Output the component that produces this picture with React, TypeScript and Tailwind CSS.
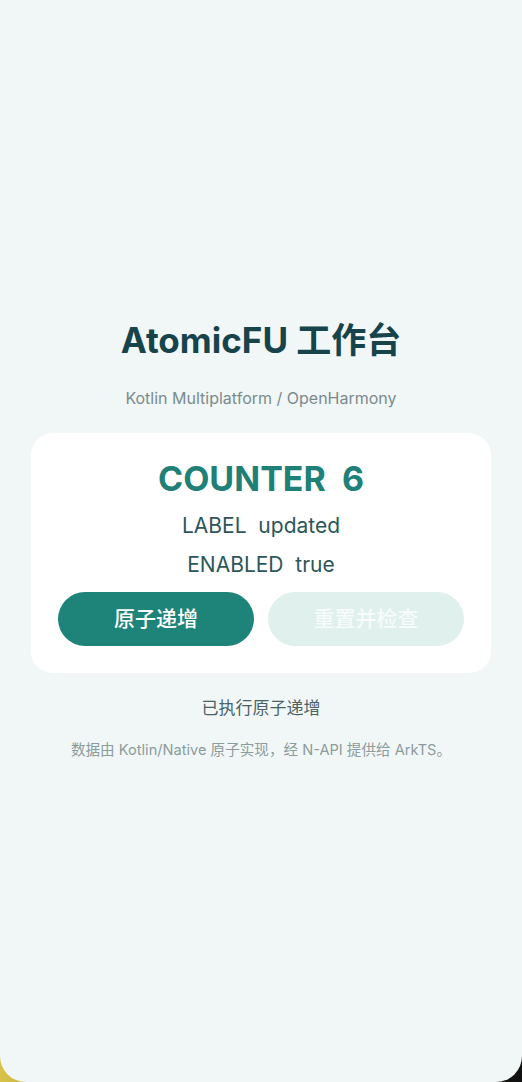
import React from 'react';

const font = { fontFamily: 'Inter, "Noto Sans CJK SC", sans-serif' };

export default function App() {
  return (
    <div className="w-[522px] h-[1082px] bg-gradient-to-r from-[#d8c24a] to-[#111111]" style={font}>
      <div className="h-full w-full bg-[#f1f7f7] rounded-b-[26px] flex flex-col items-center pt-[316px]">
        <h1 className="text-[35px] leading-[48px] font-bold text-[#17434a]">AtomicFU 工作台</h1>
        <p className="mt-[24px] text-[16px] leading-[20px] text-[#7b8b8d]">Kotlin Multiplatform / OpenHarmony</p>

        <div className="mt-[25px] w-[460px] bg-white rounded-[22px] px-[27px] pt-[23px] pb-[27px] flex flex-col items-center">
          <div className="text-[34px] leading-[46px] font-bold text-[#1e8077] whitespace-pre">COUNTER  6</div>
          <div className="mt-[8px] text-[21px] leading-[32px] text-[#2d5659] whitespace-pre">LABEL  updated</div>
          <div className="mt-[7px] text-[21px] leading-[32px] text-[#2d5659] whitespace-pre">ENABLED  true</div>
          <div className="mt-[11px] w-full grid grid-cols-2 gap-[14px]">
            <button className="h-[54px] rounded-full bg-[#1e847a] text-white text-[21px] font-medium">原子递增</button>
            <button className="h-[54px] rounded-full bg-[#e0f0ec] text-[#f7fbfa] text-[21px] font-medium">重置并检查</button>
          </div>
        </div>

        <p className="mt-[23px] text-[17px] leading-[24px] text-[#4c6366]">已执行原子递增</p>
        <p className="mt-[20px] text-[14.6px] leading-[20px] text-[#8c9b9c]">数据由 Kotlin/Native 原子实现，经 N-API 提供给 ArkTS。</p>
      </div>
    </div>
  );
}
